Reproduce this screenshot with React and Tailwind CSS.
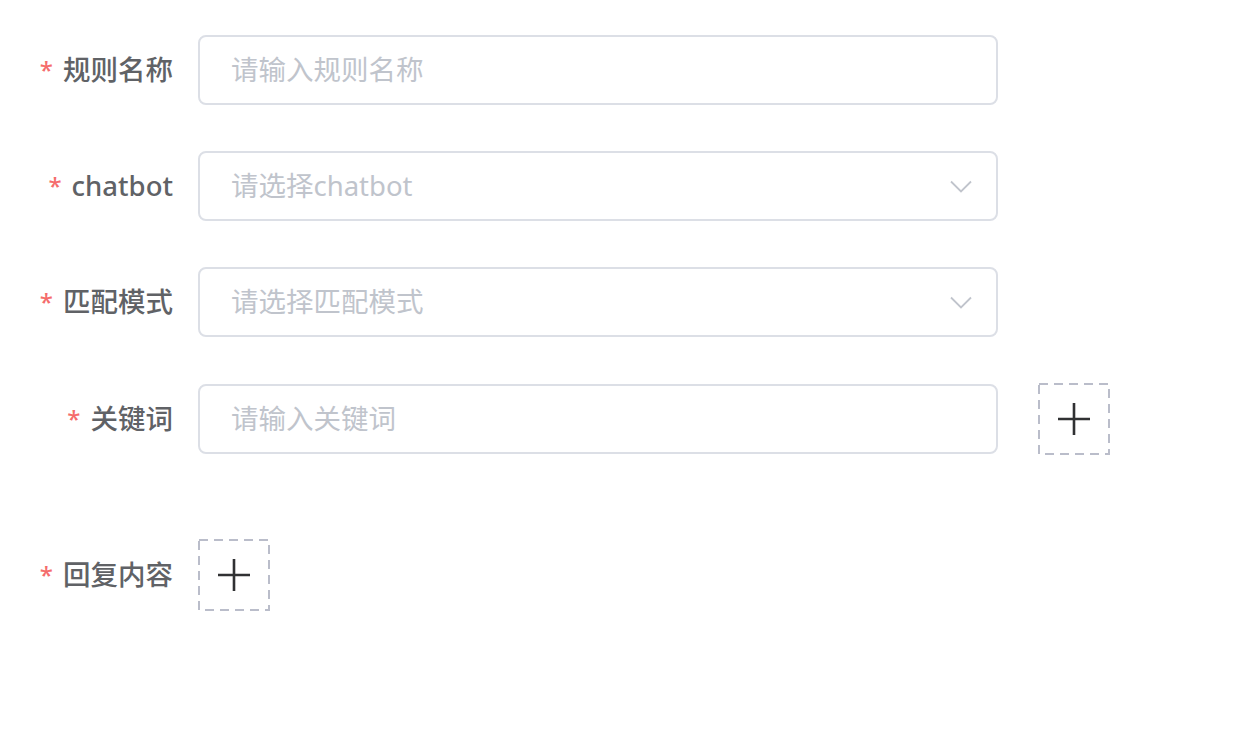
import React from "react";

const Label = ({ children }) => (
  <div className="w-[173px] shrink-0 flex justify-end items-center h-[70px] text-[27.5px] font-medium text-[#606266]">
    <span className="text-[#f56c6c] mr-[10px] text-[24px]">*</span>
    <span>{children}</span>
  </div>
);

const Chevron = () => (
  <svg width="22" height="14" viewBox="0 0 22 14" className="absolute right-[24px] top-[27px]">
    <path d="M1 1.5 L11 11.5 L21 1.5" fill="none" stroke="#c0c4cc" strokeWidth="1.8" />
  </svg>
);

const Field = ({ placeholder, select }) => (
  <div className="relative w-[800px] h-[70px] ml-[25px] rounded-[8px] border-2 border-[#dcdfe6] flex items-center pl-[31px] text-[27.5px] text-[#c0c4cc]">
    {placeholder}
    {select && <Chevron />}
  </div>
);

const PlusBox = ({ className = "" }) => (
  <div className={`relative w-[72px] h-[72px] flex items-center justify-center ${className}`}>
    <svg width="72" height="72" viewBox="0 0 72 72" className="absolute inset-0">
      <rect x="1" y="1" width="70" height="70" fill="none" stroke="#babdca" strokeWidth="2" strokeDasharray="9 6" />
    </svg>
    <svg width="34" height="34" viewBox="0 0 34 34">
      <path d="M17 1 V33 M1 17 H33" stroke="#303133" strokeWidth="2.6" />
    </svg>
  </div>
);

export default function App() {
  return (
    <div
      className="w-[1252px] h-[734px] bg-white pt-[35px]"
      style={{ fontFamily: '"Noto Sans", "Noto Sans CJK SC", sans-serif' }}
    >
      <div className="flex items-center">
        <Label>规则名称</Label>
        <Field placeholder="请输入规则名称" />
      </div>
      <div className="flex items-center mt-[46px]">
        <Label>chatbot</Label>
        <Field placeholder="请选择chatbot" select />
      </div>
      <div className="flex items-center mt-[46px]">
        <Label>匹配模式</Label>
        <Field placeholder="请选择匹配模式" select />
      </div>
      <div className="flex items-center mt-[46px]">
        <Label>关键词</Label>
        <Field placeholder="请输入关键词" />
        <PlusBox className="ml-[40px]" />
      </div>
      <div className="flex items-center mt-[84px]">
        <Label>回复内容</Label>
        <PlusBox className="ml-[25px]" />
      </div>
    </div>
  );
}
